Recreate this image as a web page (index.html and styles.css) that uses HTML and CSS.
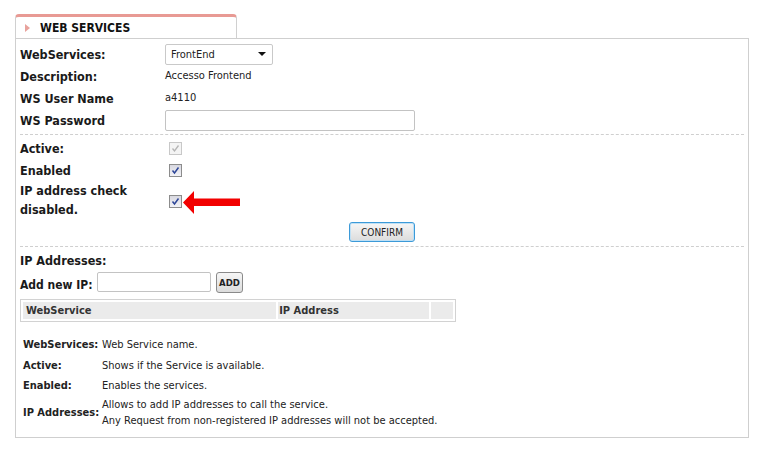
FILE: index.html
```html
<!DOCTYPE html>
<html>
<head>
<meta charset="utf-8">
<link rel="stylesheet" href="styles.css">
</head>
<body>
<div class="page">
  <div class="tab"><span class="tri"></span><span class="tab-title">WEB SERVICES</span></div>
  <div class="panel">
    <div class="row">
      <div class="lbl">WebServices:</div>
      <div class="val"><div class="select"><span>FrontEnd</span><span class="caret"></span></div></div>
    </div>
    <div class="row">
      <div class="lbl">Description:</div>
      <div class="val text">Accesso Frontend</div>
    </div>
    <div class="row">
      <div class="lbl">WS User Name</div>
      <div class="val text">a4110</div>
    </div>
    <div class="row">
      <div class="lbl">WS Password</div>
      <div class="val"><div class="input pw"></div></div>
    </div>
    <div class="sep"></div>
    <div class="row">
      <div class="lbl">Active:</div>
      <div class="val"><span class="cb disabled"><svg viewBox="0 0 11 11" width="11" height="11"><path d="M2.5 5.5 L4.5 8 L8.5 2.5" fill="none" stroke="#b4b4b4" stroke-width="1.3"/></svg></span></div>
    </div>
    <div class="row">
      <div class="lbl">Enabled</div>
      <div class="val"><span class="cb"><svg viewBox="0 0 11 11" width="11" height="11"><path d="M2.5 5.5 L4.5 8 L8.5 2.5" fill="none" stroke="#2d4698" stroke-width="1.5"/></svg></span></div>
    </div>
    <div class="row tall">
      <div class="lbl">IP address check<br>disabled.</div>
      <div class="val">
        <span class="cb has-arrow"><svg viewBox="0 0 11 11" width="11" height="11"><path d="M2.5 5.5 L4.5 8 L8.5 2.5" fill="none" stroke="#2d4698" stroke-width="1.5"/></svg>
          <svg class="arrow" width="57" height="23" viewBox="0 0 57 23"><polygon points="0,11.5 11,0 11,7.5 57,7.5 57,15 11,15 11,23" fill="#f20000"/></svg>
        </span>
      </div>
    </div>
    <div class="btn-row"><span class="btn confirm">CONFIRM</span></div>
    <div class="sep sep2"></div>
    <div class="row">
      <div class="lbl">IP Addresses:</div>
    </div>
    <div class="add-row">
      <span class="lbl-inline">Add new IP:</span>
      <div class="input ip"></div>
      <span class="btn add">ADD</span>
    </div>
    <table class="grid">
      <tr>
        <th class="c1">WebService</th>
        <th class="c2">IP Address</th>
        <th class="c3"></th>
      </tr>
    </table>
    <div class="legend">
      <div class="lg-row r1"><span class="lg-lbl">WebServices:</span><span class="lg-txt">Web Service name.</span></div>
      <div class="lg-row r2"><span class="lg-lbl">Active:</span><span class="lg-txt">Shows if the Service is available.</span></div>
      <div class="lg-row r3"><span class="lg-lbl">Enabled:</span><span class="lg-txt">Enables the services.</span></div>
      <div class="lg-row r4"><span class="lg-lbl">IP Addresses:</span><span class="lg-txt">Allows to add IP addresses to call the service.<br>Any Request from non-registered IP addresses will not be accepted.</span></div>
    </div>
  </div>
</div>
</body>
</html>
```

FILE: styles.css
```css
html, body {
  margin: 0;
  padding: 0;
  background: #ffffff;
}
body {
  font-family: "DejaVu Sans Condensed", "DejaVu Sans", sans-serif;
  font-stretch: condensed;
  color: #1a1a1a;
}
.page {
  padding: 14px 0 0 15px;
  width: 734px;
}
.tab {
  box-sizing: border-box;
  width: 222px;
  height: 24px;
  border-top: 3px solid #e89a94;
  border-left: 1px solid #d0d0d0;
  border-right: 1px solid #d0d0d0;
  border-radius: 4px 4px 0 0;
  display: flex;
  align-items: center;
  background: #fff;
}
.tri {
  width: 0;
  height: 0;
  border-left: 5px solid #e8a29c;
  border-top: 4px solid transparent;
  border-bottom: 4px solid transparent;
  margin-left: 9px;
  margin-right: 10px;
}
.tab-title {
  font-weight: bold;
  font-size: 12px;
  color: #111;
}
.panel {
  box-sizing: border-box;
  width: 734px;
  border: 1px solid #cfcfcf;
  padding: 4px 4px 8px;
}
.row {
  display: flex;
  align-items: center;
  height: 22px;
}
.row.tall {
  height: 38px;
}
.lbl {
  width: 145px;
  flex: none;
  font-weight: bold;
  font-size: 12.5px;
  line-height: 19px;
  color: #1a1a1a;
}
.val {
  display: flex;
  align-items: center;
}
.val.text {
  font-size: 11px;
  color: #222;
  margin-top: -2px;
}
.select {
  box-sizing: border-box;
  width: 108px;
  height: 21px;
  border: 1px solid #c9c9c9;
  border-radius: 2px;
  display: flex;
  align-items: center;
  justify-content: space-between;
  padding: 0 6px 0 5px;
  font-size: 11px;
  color: #222;
}
.caret {
  width: 0;
  height: 0;
  border-top: 4px solid #111;
  border-left: 4px solid transparent;
  border-right: 4px solid transparent;
}
.input {
  box-sizing: border-box;
  border: 1px solid #c3c3c3;
  border-radius: 2px;
  background: #fff;
}
.input.pw {
  width: 250px;
  height: 21px;
}
.sep {
  border-top: 1px dashed #cfcfcf;
  margin: 3px 0 2px;
}
.sep.sep2 {
  margin-top: 0;
}
.cb {
  box-sizing: border-box;
  width: 13px;
  height: 13px;
  margin-left: 4px;
  border: 1px solid #8c8c8c;
  background: linear-gradient(#d8d8e0, #f2f2f6);
  display: flex;
  align-items: center;
  justify-content: center;
}
.cb.disabled {
  border-color: #c8c8c8;
  background: #f4f4f4;
}
.has-arrow {
  position: relative;
  top: 1px;
}
.arrow {
  position: absolute;
  left: 13px;
  top: -5px;
}
.btn-row {
  display: flex;
  justify-content: center;
  padding: 3px 0 4px;
}
.btn {
  box-sizing: border-box;
  display: inline-flex;
  align-items: center;
  justify-content: center;
  font-size: 10px;
  color: #222;
  background: linear-gradient(#f6f6f6, #dcdcdc);
  border-radius: 3px;
}
.btn.confirm {
  width: 66px;
  height: 20px;
  border: 1px solid #3c9ad8;
  box-shadow: inset 0 0 0 1px #bfe0f5;
}
.add-row {
  display: flex;
  align-items: flex-start;
  height: 24px;
  padding-top: 1px;
}
.lbl-inline {
  font-weight: bold;
  font-size: 12px;
  line-height: 19px;
  padding-top: 4px;
  width: 77px;
}
.input.ip {
  width: 114px;
  height: 20px;
}
.btn.add {
  margin-left: 5px;
  width: 27px;
  height: 21px;
  border: 1px solid #8a8a8a;
  font-weight: bold;
  font-size: 9.5px;
}
.grid {
  margin-top: 3px;
  border: 1px solid #d2d2d2;
  border-spacing: 2px;
  width: 436px;
}
.grid th {
  background: #ebebeb;
  height: 17px;
  padding: 0 3px;
  text-align: left;
  font-size: 11px;
  font-weight: bold;
  color: #333;
}
.grid .c1 { width: 246px; }
.grid .c2 { width: 146px; padding-left: 1px; }
.grid .c3 { width: 16px; }
.legend {
  margin-top: 12px;
  padding-left: 3px;
  font-size: 11px;
}
.lg-row {
  display: flex;
  align-items: center;
}
.lg-row.r1 { height: 21px; }
.lg-row.r2 { height: 20px; }
.lg-row.r3 { height: 20px; }
.lg-row.r4 { margin-top: 2px; line-height: 16px; }
.lg-lbl {
  width: 79px;
  flex: none;
  font-weight: bold;
  font-size: 11px;
  color: #222;
}
.lg-txt {
  color: #222;
}
```
